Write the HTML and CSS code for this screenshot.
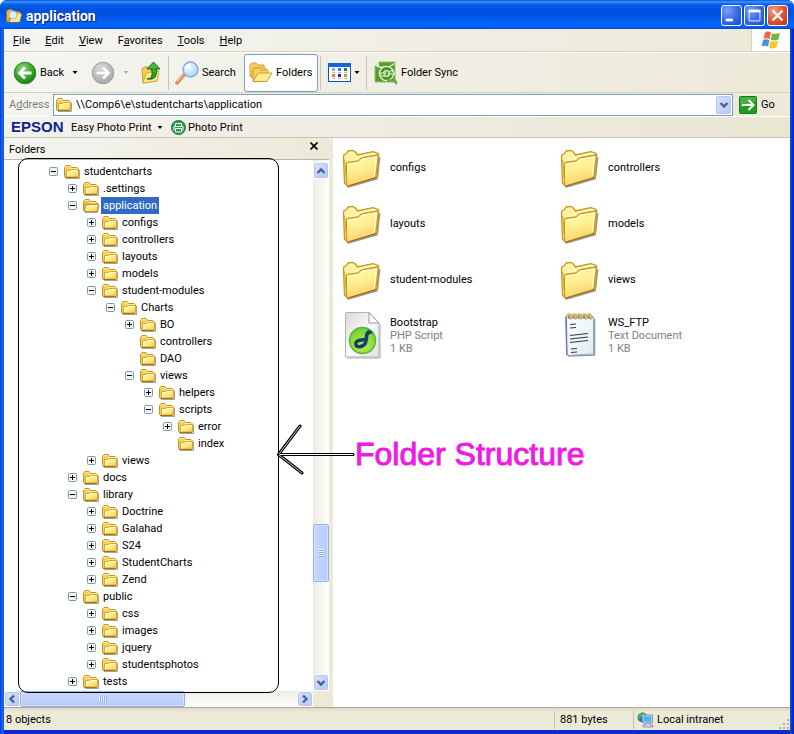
FILE: index.html
```html
<!DOCTYPE html>
<html lang="en">
<head>
<meta charset="utf-8">
<title>application</title>
<link rel="stylesheet" href="styles.css">
</head>
<body>
<svg class="defs" aria-hidden="true">
  <defs>
    <linearGradient id="gFold" x1="0" y1="0" x2="1" y2="1"><stop offset="0" stop-color="#fff9a0"/><stop offset="0.5" stop-color="#ffec88"/><stop offset="1" stop-color="#f6c648"/></linearGradient>
    <linearGradient id="gBig" x1="0" y1="0" x2="0.3" y2="1"><stop offset="0" stop-color="#fffdac"/><stop offset="0.5" stop-color="#fff094"/><stop offset="1" stop-color="#fcd06c"/></linearGradient>
    <linearGradient id="gBack" x1="0" y1="0" x2="1" y2="0"><stop offset="0" stop-color="#fff0a0"/><stop offset="1" stop-color="#fffbc4"/></linearGradient>
    <radialGradient id="gGreen" cx="0.4" cy="0.3" r="0.75"><stop offset="0" stop-color="#8fdc78"/><stop offset="0.5" stop-color="#3fac34"/><stop offset="1" stop-color="#157a12"/></radialGradient>
    <radialGradient id="gGrey" cx="0.4" cy="0.3" r="0.75"><stop offset="0" stop-color="#dcdcdc"/><stop offset="1" stop-color="#a4a4a4"/></radialGradient>
    <radialGradient id="gLens" cx="0.4" cy="0.35" r="0.7"><stop offset="0" stop-color="#f6fdff"/><stop offset="1" stop-color="#9dd4f6"/></radialGradient>
    <radialGradient id="gLime" cx="0.5" cy="0.7" r="0.7"><stop offset="0" stop-color="#b8f050"/><stop offset="1" stop-color="#74cc30"/></radialGradient>
    <linearGradient id="gPage" x1="0" y1="0" x2="1" y2="1"><stop offset="0" stop-color="#d8d8d8"/><stop offset="0.5" stop-color="#fafafa"/><stop offset="1" stop-color="#e2e2e2"/></linearGradient>
    <linearGradient id="gPad" x1="0" y1="0" x2="1" y2="1"><stop offset="0" stop-color="#ffffff"/><stop offset="1" stop-color="#dcecf2"/></linearGradient>
    <symbol id="folder" viewBox="0 0 17 16">
      <path d="M2 14.500H15.500V6" fill="none" stroke="#666" stroke-opacity=".6"/>
      <path d="M.5 12.500V3.500L2 1.500H6L7.500 3.500H13L14.500 5V12.500L13.500 13.500H1.500Z" fill="#f5cf58" stroke="#c8921e"/>
      <path d="M1.500 4V3.500L2.500 2.500H5.500L7 4.500H13.500" fill="none" stroke="#ffefa0"/>
      <path d="M2.500 13V6.500H6.500L7.500 5.500H14.500V13Z" fill="url(#gFold)" stroke="#d9a430"/>
      <path d="M3.500 12V7.500H7L8 6.500H13.500" fill="none" stroke="#fffcd0"/>
      <path d="M1 13.500H14" stroke="#a8740c"/>
    </symbol>
    <symbol id="folder-open" viewBox="0 0 17 16">
      <path d="M2 14.500H14.500L16 7" fill="none" stroke="#666" stroke-opacity=".6"/>
      <path d="M.5 12.500V3.500L2 1.500H6L7.500 3.500H13L14.500 5V12.500L13.500 13.500H1.500Z" fill="#e8bc48" stroke="#c8921e"/>
      <path d="M1.500 4L2.500 2.500H5.500L7 4.500H13.500" fill="none" stroke="#fff5a4"/>
      <path d="M1.500 13L3.500 6.500H15.500L14 13.500H2Z" fill="url(#gFold)" stroke="#c8921e"/>
      <path d="M3 12L4.500 7.500H14.500" fill="none" stroke="#fffcd0"/>
    </symbol>
    <symbol id="big-folder" viewBox="0 0 48 48">
      <path d="M9.500 44L39 35.500L41.500 14" fill="none" stroke="#555" stroke-width="2" opacity=".6" stroke-linejoin="round"/>
      <path d="M5.500 13.500L6 11.500L8.500 10.500L10 8L14.500 7.300L17 8.500L19.500 12L35 8.700L40.500 10.500L39.500 33L9 42.500L6.500 40Z" fill="url(#gBack)" stroke="#c8961c" stroke-width="1.300" stroke-linejoin="round"/>
      <path d="M6.500 17L8.800 40" stroke="#d4a430"/>
      <path d="M24 14.500L40 11.500" stroke="#d9b040"/>
      <path d="M8.300 21.500Q8.300 19.500 10 19.300L20 18L24 14.800L39 12.300Q40.500 12.300 40.200 14L37.800 34.500L10 43Q8.500 43 8.500 41.500Z" fill="url(#gBig)" stroke="#cc981c" stroke-width="1.300" stroke-linejoin="round"/>
      <path d="M9.500 21.500L20.500 19.500L24.500 16.300L38 14L36.300 33" fill="none" stroke="#fffee0" stroke-width="1.200"/>
      <path d="M9.500 43.200L38 34.700" stroke="#946a0c"/>
    </symbol>
    <symbol id="plus" viewBox="0 0 9 9"><rect x=".5" y=".5" width="8" height="8" rx="1" fill="#f5f4ef" stroke="#7898b5"/><path d="M2 4.500H7M4.500 2V7" stroke="#000"/></symbol>
    <symbol id="minus" viewBox="0 0 9 9"><rect x=".5" y=".5" width="8" height="8" rx="1" fill="#f5f4ef" stroke="#7898b5"/><path d="M2 4.500H7" stroke="#000"/></symbol>
    <symbol id="chev" viewBox="0 0 10 10"><path d="M1.500 3L5 6.500L8.500 3" fill="none" stroke="#4d6185" stroke-width="2.400"/></symbol>
    <symbol id="caret" viewBox="0 0 5 3"><path d="M0 0H5L2.500 3Z" fill="currentColor"/></symbol>
  </defs>
</svg>
<div class="window">
  <header class="titlebar">
    <svg class="app-icon" viewBox="0 0 16 16" width="16" height="16" aria-hidden="true"><path d="M.5 13V3.500L2 1.500H6L7.500 3.500H13L15.500 6L13.500 14H1.500Z" fill="#ecb939" stroke="#a87010"/><path d="M4 14L6 6H15.500L13.500 14Z" fill="#ffe684"/><circle cx="7" cy="7" r="4" fill="#d9f1ff" stroke="#9bbfd4"/><path d="M4.500 10L2 13" stroke="#d28a45" stroke-width="2"/></svg>
    <h1>application</h1>
    <div class="caption">
      <button type="button" aria-label="Minimize"><svg viewBox="0 0 21 21" width="19" height="19"><path d="M4 15.500H12" stroke="#fff" stroke-width="3"/></svg></button>
      <button type="button" aria-label="Maximize"><svg viewBox="0 0 21 21" width="19" height="19"><path d="M4.500 5V16.500H16.500V5" fill="none" stroke="#fff"/><path d="M4 5.500H17" stroke="#fff" stroke-width="3"/></svg></button>
      <button type="button" class="close" aria-label="Close"><svg viewBox="0 0 21 21" width="19" height="19"><path d="M5 5L16 16M16 5L5 16" stroke="#fff" stroke-width="2.400"/></svg></button>
    </div>
  </header>

  <div class="menurow">
    <nav class="menu">
      <button type="button"><u>F</u>ile</button><button type="button"><u>E</u>dit</button><button type="button"><u>V</u>iew</button><button type="button">F<u>a</u>vorites</button><button type="button"><u>T</u>ools</button><button type="button"><u>H</u>elp</button>
    </nav>
    <div class="flag"><svg viewBox="0 0 20 18" width="20" height="18" aria-hidden="true"><path d="M4 1.500Q7 -.5 10 1.800L8.700 8.300Q5.500 6.500 2.500 7.800Z" fill="#f0683a"/><path d="M11 2.300Q14.500 4 19 1.800L17.500 8.600Q13.500 10.500 9.800 8.800Z" fill="#6db83a"/><path d="M2.200 8.800Q5.500 7.500 8.500 9.300L7 15.800Q4 14 .5 15.300Z" fill="#4a8fe0"/><path d="M9.500 9.900Q13 11.500 17.200 9.700L15.500 16.500Q11.500 18.300 8 16.400Z" fill="#fbc52c"/></svg></div>
  </div>

  <div class="toolbar">
    <button type="button" class="tool back"><svg viewBox="0 0 24 24" width="24" height="24"><circle cx="12" cy="12" r="10.800" fill="url(#gGreen)" stroke="#2e8a2a"/><path d="M18.500 12H7M12 6.500L6.500 12L12 17.500" fill="none" stroke="#fff" stroke-width="2.800"/></svg>Back<svg class="caret" width="6" height="3"><use href="#caret"/></svg></button>
    <button type="button" class="tool forward" aria-label="Forward"><svg viewBox="0 0 24 24" width="24" height="24"><circle cx="12" cy="12" r="10.800" fill="url(#gGrey)" stroke="#a2a2a2"/><path d="M5.500 12H17M12 6.500L17.500 12L12 17.500" fill="none" stroke="#fff" stroke-width="2.600"/></svg><svg class="caret" width="6" height="3"><use href="#caret"/></svg></button>
    <button type="button" class="tool up" aria-label="Up"><svg viewBox="0 0 24 24" width="24" height="24"><path d="M3 8L5 6H9L11 8H18L17 20L4 22Z" fill="#f3cd58" stroke="#cf9d28"/><path d="M4 22L7 12L20 10L18 20Z" fill="#ffe987" stroke="#d8a632"/><path d="M8 18Q15 18 12.500 7.500H17.500Q19 20 8 18Z" fill="#2c9c2a" stroke="#127412"/><path d="M8 8L14.500 1L21 8Z" fill="#46b83c" stroke="#127412"/><path d="M13.500 7.500H16.500L17 11H14Z" fill="#3cab34"/></svg></button>
    <span class="sep"></span>
    <button type="button" class="tool search"><svg viewBox="0 0 24 24" width="24" height="24"><path d="M8.500 14.500L2 22" stroke="#d88a50" stroke-width="3.500" stroke-linecap="round"/><path d="M8 14L2 21" stroke="#f5bb88" stroke-width="1.500"/><circle cx="15.500" cy="8.500" r="7.500" fill="url(#gLens)" stroke="#8fabe0" stroke-width="1.500"/><path d="M11 8Q11.500 4.500 15 4" fill="none" stroke="#fff" stroke-width="2"/></svg>Search</button>
    <button type="button" class="tool pressed" aria-pressed="true"><svg viewBox="0 0 24 24" width="24" height="24"><path d="M1 15V4L3 2H7L9 4H15V9L4 17Z" fill="#f7cf60" stroke="#d4a030"/><path d="M2 16L5 7H17L13 17Z" fill="#ffe780" stroke="#d8a638"/><path d="M4 20V9L6 7H10L12 9H19V12L7 21Z" fill="#f7cf60" stroke="#d4a030"/><path d="M4 20.500L9 12H23L18 20.500Z" fill="#ffec8e" stroke="#d09a28"/></svg>Folders</button>
    <span class="sep"></span>
    <button type="button" class="tool views" aria-label="Views"><svg viewBox="0 0 23 19" width="23" height="19"><rect x=".5" y=".5" width="22" height="18" fill="#fff" stroke="#0c54c4"/><path d="M0 2H23" stroke="#1464d8" stroke-width="4"/><path d="M4 5H7V8H4Z" fill="#a69ddd"/><path d="M10 5H13V8H10Z" fill="#2681ec"/><path d="M16 5H19V8H16Z" fill="#17931f"/><path d="M4 11H7V14H4Z" fill="#fa7544"/><path d="M10 11H13V14H10Z" fill="#0b3492"/><path d="M16 11H19V14H16Z" fill="#d0980f"/><path d="M4 9.500H7M10 9.500H13M16 9.500H19M4 15.500H7M10 15.500H13M16 15.500H19" stroke="#b4b4b4"/></svg><svg class="caret" width="6" height="3"><use href="#caret"/></svg></button>
    <span class="sep"></span>
    <button type="button" class="tool sync"><svg viewBox="0 0 24 24" width="24" height="24"><path d="M5 1H21V21H1V5Z" fill="#5b9b2e" stroke="#8fbf6a"/><path d="M1 5L5 1V5Z" fill="#e8f4dc"/><path d="M2.500 5Q12 9 20.500 2.500" fill="none" stroke="#d8ecc4" stroke-width="1.500"/><circle cx="12.500" cy="12.500" r="5" fill="none" stroke="#e9f7d9" stroke-width="5.500"/><circle cx="12.500" cy="12.500" r="5" fill="none" stroke="#4a9024" stroke-width="3"/><path d="M5 12H12L8.500 16ZM14 13H21L17.500 9Z" fill="#63ad34" stroke="#e9f7d9"/><path d="M13 19.500H21L22.500 23" fill="none" stroke="#69a943" stroke-width="2.500"/></svg>Folder Sync</button>
  </div>

  <form class="address">
    <label for="addr">A<u>d</u>dress</label>
    <div class="combo">
      <svg width="17" height="16" aria-hidden="true"><use href="#folder"/></svg>
      <input id="addr" type="text" value="\\Comp6\e\studentcharts\application">
      <button type="button" class="sb" aria-label="Address list"><svg width="10" height="10"><use href="#chev"/></svg></button>
    </div>
    <button type="button" class="go"><svg viewBox="0 0 18 18" width="18" height="18"><rect x=".5" y=".5" width="17" height="17" rx="1" fill="#249a26" stroke="#167a1a"/><path d="M1 1H17V5L1 12Z" fill="#5dba52" opacity=".6"/><path d="M3 9H14M9.500 4L14.500 9L9.500 14" fill="none" stroke="#fff" stroke-width="2"/></svg>Go</button>
  </form>

  <div class="links">
    <strong>EPSON</strong>
    <button type="button" class="easy">Easy Photo Print<svg class="caret" width="6" height="3"><use href="#caret"/></svg></button>
    <button type="button" class="photo"><svg viewBox="0 0 15 15" width="15" height="15"><circle cx="7.500" cy="7.500" r="7" fill="#2f9c50" stroke="#187538"/><path d="M4.500 6V3.500H10.500V6M3 10.500V6.500H12V10.500M4.500 8.500H10.500V12H4.500Z" fill="none" stroke="#fff"/></svg>Photo Print</button>
  </div>

  <main class="body">
    <section class="side">
      <div class="side-head"><h2>Folders</h2><button type="button" aria-label="Close folders"><svg viewBox="0 0 8 8" width="8" height="8"><path d="M.5 .5L7.500 7.500M7.500 .5L.5 7.500" stroke="#000" stroke-width="1.600"/></svg></button></div>
      <div class="side-body">
        <ul class="tree">
          <li><div class="row"><svg class="box"><use href="#minus"/></svg><svg class="fold"><use href="#folder"/></svg><span>studentcharts</span></div>
            <ul>
              <li><div class="row"><svg class="box"><use href="#plus"/></svg><svg class="fold"><use href="#folder"/></svg><span>.settings</span></div></li>
              <li><div class="row"><svg class="box"><use href="#minus"/></svg><svg class="fold"><use href="#folder-open"/></svg><span class="selected">application</span></div>
                <ul>
                  <li><div class="row"><svg class="box"><use href="#plus"/></svg><svg class="fold"><use href="#folder"/></svg><span>configs</span></div></li>
                  <li><div class="row"><svg class="box"><use href="#plus"/></svg><svg class="fold"><use href="#folder"/></svg><span>controllers</span></div></li>
                  <li><div class="row"><svg class="box"><use href="#plus"/></svg><svg class="fold"><use href="#folder"/></svg><span>layouts</span></div></li>
                  <li><div class="row"><svg class="box"><use href="#plus"/></svg><svg class="fold"><use href="#folder"/></svg><span>models</span></div></li>
                  <li><div class="row"><svg class="box"><use href="#minus"/></svg><svg class="fold"><use href="#folder"/></svg><span>student-modules</span></div>
                    <ul>
                      <li><div class="row"><svg class="box"><use href="#minus"/></svg><svg class="fold"><use href="#folder"/></svg><span>Charts</span></div>
                        <ul>
                          <li><div class="row"><svg class="box"><use href="#plus"/></svg><svg class="fold"><use href="#folder"/></svg><span>BO</span></div></li>
                          <li><div class="row"><svg class="box"></svg><svg class="fold"><use href="#folder"/></svg><span>controllers</span></div></li>
                          <li><div class="row"><svg class="box"></svg><svg class="fold"><use href="#folder"/></svg><span>DAO</span></div></li>
                          <li><div class="row"><svg class="box"><use href="#minus"/></svg><svg class="fold"><use href="#folder"/></svg><span>views</span></div>
                            <ul>
                              <li><div class="row"><svg class="box"><use href="#plus"/></svg><svg class="fold"><use href="#folder"/></svg><span>helpers</span></div></li>
                              <li><div class="row"><svg class="box"><use href="#minus"/></svg><svg class="fold"><use href="#folder"/></svg><span>scripts</span></div>
                                <ul>
                                  <li><div class="row"><svg class="box"><use href="#plus"/></svg><svg class="fold"><use href="#folder"/></svg><span>error</span></div></li>
                                  <li><div class="row"><svg class="box"></svg><svg class="fold"><use href="#folder"/></svg><span>index</span></div></li>
                                </ul>
                              </li>
                            </ul>
                          </li>
                        </ul>
                      </li>
                    </ul>
                  </li>
                  <li><div class="row"><svg class="box"><use href="#plus"/></svg><svg class="fold"><use href="#folder"/></svg><span>views</span></div></li>
                </ul>
              </li>
              <li><div class="row"><svg class="box"><use href="#plus"/></svg><svg class="fold"><use href="#folder"/></svg><span>docs</span></div></li>
              <li><div class="row"><svg class="box"><use href="#minus"/></svg><svg class="fold"><use href="#folder"/></svg><span>library</span></div>
                <ul>
                  <li><div class="row"><svg class="box"><use href="#plus"/></svg><svg class="fold"><use href="#folder"/></svg><span>Doctrine</span></div></li>
                  <li><div class="row"><svg class="box"><use href="#plus"/></svg><svg class="fold"><use href="#folder"/></svg><span>Galahad</span></div></li>
                  <li><div class="row"><svg class="box"><use href="#plus"/></svg><svg class="fold"><use href="#folder"/></svg><span>S24</span></div></li>
                  <li><div class="row"><svg class="box"><use href="#plus"/></svg><svg class="fold"><use href="#folder"/></svg><span>StudentCharts</span></div></li>
                  <li><div class="row"><svg class="box"><use href="#plus"/></svg><svg class="fold"><use href="#folder"/></svg><span>Zend</span></div></li>
                </ul>
              </li>
              <li><div class="row"><svg class="box"><use href="#minus"/></svg><svg class="fold"><use href="#folder"/></svg><span>public</span></div>
                <ul>
                  <li><div class="row"><svg class="box"><use href="#plus"/></svg><svg class="fold"><use href="#folder"/></svg><span>css</span></div></li>
                  <li><div class="row"><svg class="box"><use href="#plus"/></svg><svg class="fold"><use href="#folder"/></svg><span>images</span></div></li>
                  <li><div class="row"><svg class="box"><use href="#plus"/></svg><svg class="fold"><use href="#folder"/></svg><span>jquery</span></div></li>
                  <li><div class="row"><svg class="box"><use href="#plus"/></svg><svg class="fold"><use href="#folder"/></svg><span>studentsphotos</span></div></li>
                </ul>
              </li>
              <li><div class="row"><svg class="box"><use href="#plus"/></svg><svg class="fold"><use href="#folder"/></svg><span>tests</span></div></li>
            </ul>
          </li>
        </ul>
        <div class="vscroll">
          <button type="button" class="sb" aria-label="Scroll up"><svg class="to-up" width="10" height="10"><use href="#chev"/></svg></button>
          <div class="track-before"></div>
          <div class="thumb"></div>
          <div class="track-after"></div>
          <button type="button" class="sb" aria-label="Scroll down"><svg width="10" height="10"><use href="#chev"/></svg></button>
        </div>
        <div class="hscroll">
          <button type="button" class="sb" aria-label="Scroll left"><svg class="to-left" width="10" height="10"><use href="#chev"/></svg></button>
          <div class="thumb"></div>
          <div class="track-after"></div>
          <button type="button" class="sb" aria-label="Scroll right"><svg class="to-right" width="10" height="10"><use href="#chev"/></svg></button>
        </div>
      </div>
      <div class="outline"></div>
    </section>

    <section class="files">
      <div class="tile"><svg><use href="#big-folder"/></svg><p>configs</p></div>
      <div class="tile"><svg><use href="#big-folder"/></svg><p>controllers</p></div>
      <div class="tile"><svg><use href="#big-folder"/></svg><p>layouts</p></div>
      <div class="tile"><svg><use href="#big-folder"/></svg><p>models</p></div>
      <div class="tile"><svg><use href="#big-folder"/></svg><p>student-modules</p></div>
      <div class="tile"><svg><use href="#big-folder"/></svg><p>views</p></div>
      <div class="tile"><svg viewBox="0 0 48 48"><path d="M9 47H42V13" fill="none" stroke="#aaa"/><path d="M7.500 2.500Q7.500 1.500 8.500 1.500H31L41 12V46H7.500Z" fill="url(#gPage)" stroke="#b4b4b4"/><path d="M31 1.500V12H41Z" fill="#fff" stroke="#999"/><circle cx="24.500" cy="29.500" r="13" fill="url(#gLime)" stroke="#5cb43c" stroke-width="1.500"/><path d="M32 20.500Q28 21.500 28.500 28L27 33Q23 37 18.500 35Q16 31 21 29.500Q25 28.500 28 29" fill="none" stroke="#123f66" stroke-width="3.500" stroke-linejoin="round"/><path d="M28 23L34 21" stroke="#123f66" stroke-width="2.500"/></svg><p>Bootstrap<small>PHP Script</small><small>1 KB</small></p></div>
      <div class="tile"><svg viewBox="0 0 48 48"><path d="M12 45L38.500 44V8" fill="none" stroke="#8c98a4" stroke-width="1.500"/><path d="M9.500 6H37.500V43L11 44.500Z" fill="url(#gPad)" stroke="#9aa8b8"/><path d="M9.500 6L10 44H11.500L11 6Z" fill="#7778c0"/><path d="M13 4V8M18 4V8M23 4V8M28 4V8M33 4V8" stroke="#3d469c"/><path d="M10 6Q12 1 15 4T14 8M15 6Q17 1 20 4T19 8M20 6Q22 1 25 4T24 8M25 6Q27 1 30 4T29 8M30 6Q32 1 35 4T34 8" fill="none" stroke="#cda91d" stroke-width="1.300"/><path d="M14 13.500L20 13M14 17L20 16.500M14 24.500L32 22.500M14 28L32 26M14 31.500L32 29.500M15 38L21 37.500M15 41.500L21 41" stroke="#333b40" stroke-width="1.100"/></svg><p>WS_FTP<small>Text Document</small><small>1 KB</small></p></div>
      <div class="note">
        <svg viewBox="0 0 78 52" width="78" height="52" aria-hidden="true"><g fill="none" stroke="#000" stroke-width="3" stroke-linecap="round"><path d="M1.500 30.500H76M1.500 30.500L23 2M1.500 30.500L25 49"/></g><g fill="none" stroke="#fff" stroke-width="1"><path d="M3 30.500H76"/><path stroke="#ccc" d="M2 30L23 2M2 31L25 49"/></g></svg>
        <span>Folder Structure</span>
      </div>
    </section>
  </main>

  <footer class="status">
    <span class="count">8 objects</span>
    <span class="size">881 bytes</span>
    <span class="zone"><svg viewBox="0 0 17 16" width="17" height="16" aria-hidden="true"><circle cx="5.500" cy="5.500" r="5" fill="#2b71c8"/><path d="M2 2Q6 -1 8 2Q7 5 4 5Q2 8 1 6Z" fill="#4bb848"/><path d="M5 3H15.500V11H6Z" fill="#b9c8dd" stroke="#8b9cb8"/><path d="M6.500 4.500H14V9.500H7Z" fill="#49b1f5"/><path d="M9 11H13V13H16V15H6V13H9Z" fill="#cdd4e0" stroke="#8b9cb8"/></svg>Local intranet</span>
    <svg class="grip" viewBox="0 0 12 12" width="12" height="12" aria-hidden="true"><path d="M9 1H11V3H9ZM9 5H11V7H9ZM5 5H7V7H5ZM9 9H11V11H9ZM5 9H7V11H5ZM1 9H3V11H1Z" fill="#b8b49f"/></svg>
  </footer>
</div>
</body>
</html>
```
FILE: styles.css
```css
* { box-sizing: border-box; }

html, body { height: 100%; margin: 0; }

body {
  background: #fff;
  color: #000;
  font: 11px/13px Roboto, "Liberation Sans", sans-serif;
}

h1, h2, p, ul { margin: 0; padding: 0; }
ul { list-style: none; }

button, input {
  border: 0;
  padding: 0;
  background: none;
  color: inherit;
  font: inherit;
}

svg { display: block; flex: none; }
.defs { position: absolute; width: 0; height: 0; }

.window {
  display: flex;
  flex-direction: column;
  min-height: 100vh;
  padding: 0 4px 4px;
  border-radius: 7px 7px 0 0;
  background: linear-gradient(90deg, #0831d9, #166aee 2px, #0855dd 4px, transparent 4px, transparent calc(100% - 4px), #0855dd calc(100% - 4px), #0019c0), #0a2cc8;
  overflow: hidden;
}

/* Title bar */
.titlebar {
  display: flex;
  align-items: center;
  gap: 4px;
  height: 29px;
  margin: 0 -4px;
  padding: 2px 6px 0;
  background: linear-gradient(#0958d8, #3d95ff 2px, #0761ea 4px, #0052e0 9px, #0055e6 16px, #0566fb 24px, #0160fb 27px, #0046d0);
  color: #fff;
}
.titlebar h1 {
  flex: 1;
  font-size: 14px;
  line-height: 18px;
  text-shadow: 1px 1px 1px #0a1883;
}
.caption { display: flex; gap: 2px; }
.caption button {
  width: 21px;
  height: 21px;
  border: 1px solid #fff;
  border-radius: 3px;
  background: radial-gradient(circle at 30% 25%, #7ba2f4, #3266e4 55%, #1d4ed0);
}
.caption .close { background: radial-gradient(circle at 30% 25%, #f0a088, #e05030 55%, #c0340e); }

/* Menu bar */
.menurow {
  display: flex;
  height: 23px;
  border-bottom: 1px solid #d6d2c0;
  background: linear-gradient(90deg, #f4f4f2, #ece9d8);
}
.menu { display: flex; flex: 1; align-items: center; gap: 15px; padding-left: 9px; }
.flag {
  display: flex;
  align-items: center;
  justify-content: center;
  width: 39px;
  border-left: 1px solid #d6d2c0;
  background: #fff;
}

/* Toolbar */
.toolbar {
  display: flex;
  align-items: center;
  height: 40px;
  padding-left: 9px;
  border-top: 1px solid #fff;
  background: linear-gradient(90deg, #f4f4f1, #ece9d8);
}
.tool { display: flex; align-items: center; gap: 3px; height: 38px; white-space: nowrap; }
.back { width: 78px; }
.back .caret { margin-left: 5px; }
.forward { width: 48px; gap: 8px; }
.forward .caret { color: #b4b2a8; }
.up { width: 29px; }
.sep { width: 1px; height: 34px; background: #c9c6b4; }
.search { width: 75px; padding-left: 6px; }
.pressed {
  width: 74px;
  padding-left: 4px;
  border: 1px solid #7f9db9;
  border-radius: 3px;
  background: #fff;
}
.pressed + .sep { margin-left: 2px; }
.views { width: 45px; padding-left: 7px; }
.sync { padding-left: 7px; }

/* Address bar */
.address {
  display: flex;
  align-items: center;
  height: 24px;
  padding-left: 5px;
  border-top: 1px solid #d6d2c0;
  background: linear-gradient(90deg, #f4f4f1, #ece9d8);
}
.address label { width: 44px; color: #7f7e76; }
.combo {
  display: flex;
  flex: 1;
  align-items: center;
  height: 22px;
  padding: 1px 1px 1px 2px;
  border: 1px solid #7f9db9;
  background: #fff;
}
.combo input { flex: 1; min-width: 0; padding-left: 3px; }
.combo .sb { width: 15px; height: 18px; border: 0; }
.go { display: flex; align-items: center; gap: 4px; width: 57px; padding-left: 6px; }

/* Links bar */
.links {
  display: flex;
  align-items: center;
  height: 22px;
  padding-left: 7px;
  border-top: 1px solid #fff;
  border-bottom: 1px solid #c6c3b0;
  background: linear-gradient(90deg, #f2f2ee, #e9e6d3);
}
.links strong { width: 60px; color: #10218b; font: bold 15px/18px "Liberation Sans", sans-serif; }
.links button { display: flex; align-items: center; white-space: nowrap; }
.easy { width: 100px; gap: 5px; }
.photo { gap: 2px; }

/* Panes */
.body { display: flex; flex: 1; }
.side {
  position: relative;
  display: flex;
  flex-direction: column;
  width: 329px;
  flex: none;
  padding-right: 4px;
  background: #ece9d8;
}
.side-head {
  display: flex;
  align-items: center;
  justify-content: space-between;
  height: 22px;
  padding: 2px 11px 0 5px;
  border-bottom: 1px solid #b9b6a2;
  background: linear-gradient(90deg, #f4f4f1, #ece9d8);
}
.side-head h2 { font-size: 11px; font-weight: 400; }
.side-head button { padding-bottom: 8px; }
.side-body {
  display: grid;
  flex: 1;
  grid-template: 1fr 16px / 1fr 16px;
}

.tree { padding: 3px 0 0 45px; background: #fff; }
.tree ul { padding-left: 19px; }
.row { display: flex; align-items: center; height: 17px; }
.box { width: 9px; height: 9px; margin-right: 6px; }
.fold { width: 17px; height: 16px; margin-right: 1px; }
.row span { padding: 2px; line-height: 13px; white-space: nowrap; }
.row .selected { background: #316ac5; color: #fff; }

/* Scroll bars */
.vscroll { display: flex; flex-direction: column; padding-top: 2px; background: linear-gradient(90deg, #eeede5, #fefefb); }
.hscroll { display: flex; background: linear-gradient(#eeede5, #fefefb); }
.sb {
  display: flex;
  flex: none;
  align-items: center;
  justify-content: center;
  width: 16px;
  height: 16px;
  border: 1px solid #fff;
  border-radius: 3px;
  background: linear-gradient(135deg, #d6e2fe, #b4c8f6);
  box-shadow: inset 0 0 0 1px #b4c6f0;
}
.vscroll .sb { height: 17px; }
.to-up { transform: rotate(180deg); }
.to-left { transform: rotate(90deg); }
.to-right { transform: rotate(-90deg); }
.thumb {
  display: flex;
  align-items: center;
  justify-content: center;
  border: 1px solid #98b0e8;
  border-radius: 2px;
  box-shadow: inset 0 0 0 1px #d6e0fc;
}
.thumb::before { content: ""; width: 8px; height: 8px; }
.vscroll .thumb { height: 58px; background: linear-gradient(90deg, #c9d8fc, #b7cbf9); }
.vscroll .thumb::before { width: 6px; background: repeating-linear-gradient(#eef4fe 0 1px, #8cb0f8 1px 2px); }
.hscroll .thumb { flex: 163; background: linear-gradient(#c9d8fc, #b7cbf9); }
.hscroll .thumb::before { height: 6px; background: repeating-linear-gradient(90deg, #eef4fe 0 1px, #8cb0f8 1px 2px); }
.vscroll .track-before { flex: 346; }
.vscroll .track-after { flex: 92; }
.hscroll .track-after { flex: 112; }

/* Annotation */
.outline {
  position: absolute;
  inset: 20px 54px 14px 14px;
  border: 1px solid #000;
  border-radius: 10px;
  pointer-events: none;
}
.note {
  position: absolute;
  left: -56px;
  top: 286px;
  display: flex;
  align-items: flex-end;
  color: #ec1ce4;
  font: 32px/44px "Liberation Sans", sans-serif;
  -webkit-text-stroke: 1px #ec1ce4;
  white-space: nowrap;
}

/* File tiles */
.files {
  position: relative;
  display: grid;
  flex: 1;
  grid-template-columns: repeat(auto-fill, 218px);
  grid-auto-rows: 56px;
  padding: 1px 0 0 5px;
  background: #fff;
}
.tile { display: flex; align-items: center; gap: 4px; }
.tile svg { width: 48px; height: 48px; }
.tile small { display: block; color: #808080; font-size: 11px; }

/* Status bar */
.status {
  display: flex;
  align-items: center;
  height: 23px;
  padding-top: 1px;
  border-top: 1px solid #aca899;
  background: linear-gradient(#dedbc9, #ece9d8 4px, #ece9d8);
}
.status span { display: flex; align-items: center; height: 18px; }
.count { flex: 1; padding-left: 2px; }
.size { width: 79px; padding-left: 5px; border-left: 1px solid #c5c2b0; }
.zone { width: 145px; gap: 3px; padding-left: 3px; border-left: 1px solid #c5c2b0; }
.grip { align-self: flex-end; }
```
